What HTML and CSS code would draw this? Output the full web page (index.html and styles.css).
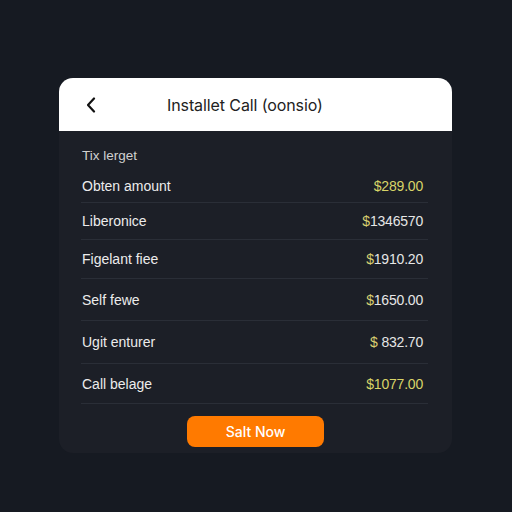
FILE: index.html
```html
<!DOCTYPE html>
<html>
<head>
<meta charset="utf-8">
<link rel="stylesheet" href="styles.css">
</head>
<body>
<div class="card">
  <div class="header">
    <svg class="back" width="12" height="16" viewBox="0 0 12 16"><path d="M9 1.5 L3 8 L9 14.5" fill="none" stroke="#111" stroke-width="2.2" stroke-linecap="round" stroke-linejoin="round"/></svg>
    <div class="title">Installet Call (oonsio)</div>
  </div>
  <div class="body">
    <div class="sub">Tix lerget</div>
    <div class="row r1"><span class="label">Obten amount</span><span class="amt yellow">$289.00</span></div>
    <div class="row r2"><span class="label">Liberonice</span><span class="amt"><b>$</b>1346570</span></div>
    <div class="row r3"><span class="label">Figelant fiee</span><span class="amt"><b>$</b>1910.20</span></div>
    <div class="row r4"><span class="label">Self fewe</span><span class="amt"><b>$</b>1650.00</span></div>
    <div class="row r5"><span class="label">Ugit enturer</span><span class="amt"><b>$</b> 832.70</span></div>
    <div class="row r6"><span class="label">Call belage</span><span class="amt yellow">$1077.00</span></div>
    <div class="btnwrap"><button class="btn">Salt Now</button></div>
  </div>
</div>
</body>
</html>
```
FILE: styles.css
```css
html, body { margin: 0; padding: 0; }
body {
  width: 512px; height: 512px;
  background: #161a22;
  font-family: "Liberation Sans", Arial, sans-serif;
  padding: 78px 0 0 59px;
  box-sizing: border-box;
}
.card {
  width: 393px;
  height: 375px;
  background: #1c1f27;
  border-radius: 14px;
  overflow: hidden;
}
.header {
  height: 53px;
  background: #ffffff;
  display: flex;
  align-items: center;
  padding-left: 26px;
}
.back { display: block; }
.title {
  margin-left: 70px;
  font-family: Inter, "Liberation Sans", sans-serif;
  font-size: 16px;
  color: #222;
  letter-spacing: -0.1px;
}
.body {
  padding: 17px 24px 0 22px;
}
.sub {
  font-size: 13.5px;
  color: #d0d0d0;
  height: 19px;
  margin-left: 1px;
}
.row {
  display: flex;
  justify-content: space-between;
  align-items: center;
  border-bottom: 1px solid #2a2e37;
  padding: 0 5px 0 1px;
}
.r1 { height: 33px; padding-top: 2px; }
.r2 { height: 36px; }
.r3 { height: 38px; }
.r4 { height: 41px; }
.r5 { height: 42px; }
.r6 { height: 39px; }
.label { font-size: 14px; color: #ececec; }
.amt { font-size: 14px; color: #e6e6e6; letter-spacing: -0.2px; }
.amt b { font-weight: normal; color: #d8cf70; }
.amt.yellow { color: #d8d468; }
.btnwrap {
  display: flex;
  justify-content: center;
  padding-top: 12px;
  padding-left: 2px;
}
.btn {
  width: 137px;
  height: 31px;
  border: none;
  border-radius: 8px;
  background: #ff7a00;
  color: #fff;
  font-family: Inter, "Liberation Sans", sans-serif;
  font-size: 14px;
  font-weight: 500;
}
```
